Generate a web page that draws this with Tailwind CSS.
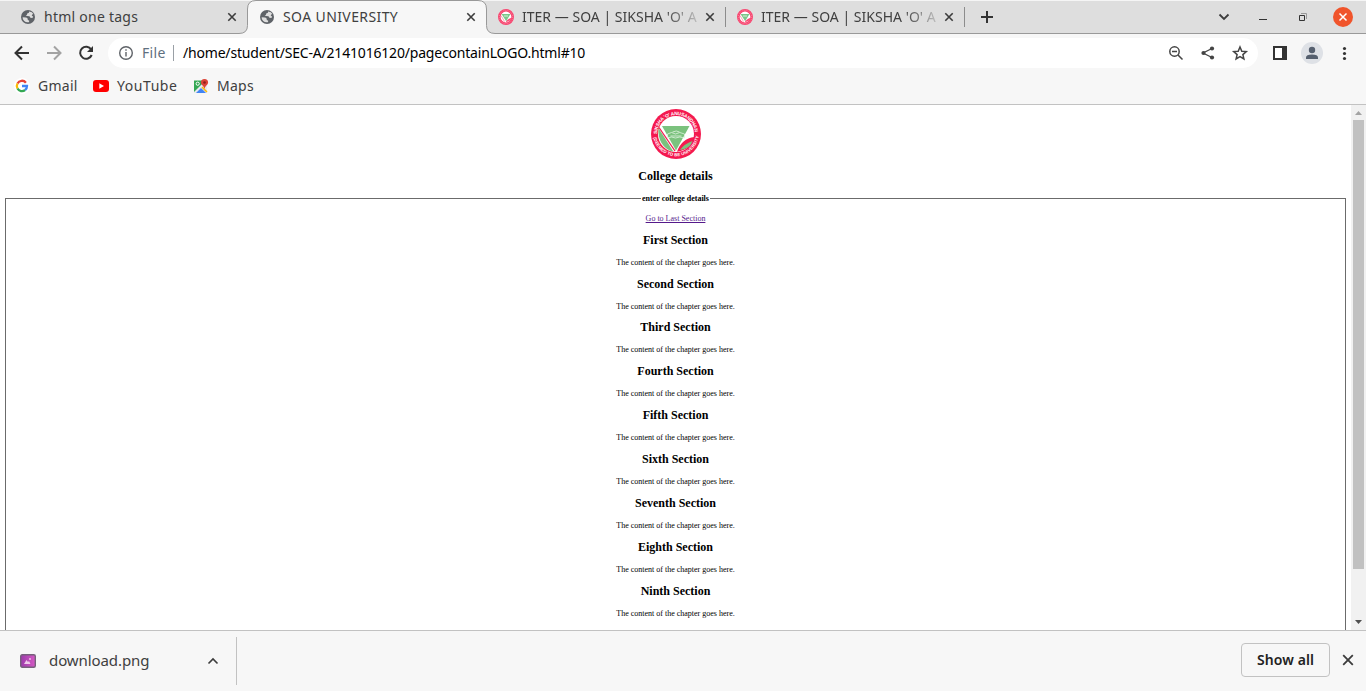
<!DOCTYPE html>
<html lang="en">
<head>
<meta charset="utf-8">
<title>SOA UNIVERSITY</title>
<script src="https://cdn.jsdelivr.net/npm/@tailwindcss/browser@4"></script>
</head>
<body class="h-[691px] w-[1366px] overflow-hidden bg-white font-['Noto_Sans',sans-serif] text-[#404040]">
<svg width="0" height="0" class="hidden">
  <defs>
    <symbol id="globe" viewBox="0 0 14 14"><circle cx="7" cy="7" r="7" fill="#5f6368"/><path d="M1.6 7.2L5 7.5q1.700.2 1.700 1.500l.1.900q1.500.2 1.500 1.100l-.5 1.200Q5 12.700 3.200 11 1.500 9.300 1.600 7.200zM8.100 1.600l-.2 1.200-1.700.6-.2 1.400-1.300.8 1.400.5 2.400.1.900 1.500 1.900.2.900-1.100-1.500-1.300.8-1.300.9-.2Q11.400 2 8.100 1.600z" fill="#dedede"/></symbol>
    <symbol id="x" viewBox="0 0 10 10"><path d="M1.300 1.300l7.400 7.400M8.700 1.300L1.300 8.700" stroke="#3c3c3c" stroke-width="1.600" fill="none"/></symbol>
    <symbol id="fav" viewBox="0 0 16 16"><circle cx="8" cy="8" r="6.700" fill="#fff" stroke="#f7446e" stroke-width="2.600"/><circle cx="8" cy="8" r="6.700" fill="none" stroke="#fba0b4" stroke-width=".7" stroke-dasharray="1 1"/><path d="M3.500 5h9L8.200 12.200z" fill="#7cc68a"/><path d="M6 7h4" stroke="#d6efd9"/><path d="M3 6.500l3.500 6M8 12.800Q10 10 13.500 9 13 12 8 12.800z" fill="#f7446e" stroke="#f7446e" stroke-width=".5"/></symbol>
    <path id="arcTop" d="M6.600 25a18.900 18.900 0 0 1 37.800 0"/>
    <path id="arcBottom" d="M2.800 26.500a22.800 22.800 0 0 0 45.400 0"/>
  </defs>
</svg>

<header class="flex h-[105px] flex-col border-b border-[#c2c2c2] bg-[#f7f7f7]">
  <div class="relative flex h-[34px] border-t border-[#f5f5f5] bg-[#dedede] text-[14px] leading-[30px]">
    <svg class="absolute -top-px left-0" width="1366" height="34"><path d="M0 33.500H239q8.500 0 8.500-8V9q0-8.500 8.500-8.500h222q8.500 0 8.500 8.500v16.500q0 8 8.500 8H1366V35H0z" fill="#f7f7f7"/><path d="M0 33.500H239q8.500 0 8.500-8V9q0-8.500 8.500-8.500h222q8.500 0 8.500 8.500v16.500q0 8 8.500 8H1366" fill="none" stroke="#999"/></svg>
    <div class="relative flex h-8 w-[247px] items-center pl-[21px]"><svg width="14" height="14"><use href="#globe"/></svg><span class="ml-[9px] w-[183px] tracking-[0.25px] whitespace-nowrap">html one tags</span><svg width="10" height="10"><use href="#x"/></svg></div>
    <div class="relative flex h-8 w-[239px] items-center pl-[13px]"><svg width="14" height="14"><use href="#globe"/></svg><span class="ml-[9px] w-[183px] tracking-[0.4px] whitespace-nowrap">SOA UNIVERSITY</span><svg width="10" height="10"><use href="#x"/></svg></div>
    <div class="relative flex h-8 w-[239px] items-center pl-[12px]"><svg width="16" height="16"><use href="#fav"/></svg><span class="ml-[8px] mr-[7px] w-[176px] overflow-hidden tracking-[0.02px] whitespace-nowrap [mask-image:linear-gradient(to_right,black_142px,transparent_184px)]">ITER — SOA | SIKSHA 'O' A</span><svg width="10" height="10"><use href="#x"/></svg></div>
    <div class="relative flex h-8 w-[240px] items-center pl-[12px]"><span class="-ml-[12px] mr-[11px] h-5 w-px bg-[#8c8c8c]"></span><svg width="16" height="16"><use href="#fav"/></svg><span class="ml-[8px] mr-[7px] w-[176px] overflow-hidden tracking-[0.02px] whitespace-nowrap [mask-image:linear-gradient(to_right,black_142px,transparent_184px)]">ITER — SOA | SIKSHA 'O' A</span><svg width="10" height="10"><use href="#x"/></svg><span class="ml-[10px] h-5 w-px bg-[#8c8c8c]"></span></div>
    <svg class="relative ml-[16px] mt-[10px]" width="12" height="12"><path d="M6 0v12M0 6h12" stroke="#333" stroke-width="2"/></svg>
    <svg class="relative ml-[225px]" width="148" height="32" fill="none"><path d="M1.500 13.500L6 18l4.500-4.500" stroke="#3c3c3c" stroke-width="1.800"/><path d="M41 18.500h8" stroke="#333"/><path d="M83 12.500h5.500V18" stroke="#999"/><path d="M81.500 14.500h5v5h-5z" stroke="#333"/><circle cx="125" cy="16" r="10" fill="#f0542b"/><path d="M121.500 12.500l7 7M128.500 12.500l-7 7" stroke="#fff" stroke-width="1.500"/></svg>
  </div>

  <div class="flex h-[38px] items-center">
    <svg width="108" height="38" fill="none" stroke="#333" stroke-width="2"><path d="M29 19H16M22 12.500L15.500 19l6.500 6.500"/><path d="M47 19h13M54 12.500l6.500 6.500-6.500 6.500" stroke="#a3a3a3"/><path d="M91.200 15.500A6 6 0 1 0 91.700 21"/><path d="M93 12v6h-6z" fill="#333" stroke="none"/></svg>
    <div class="flex h-[30px] w-[1150px] items-center rounded-full bg-white pl-[11px] text-[14px]">
      <svg width="14" height="14" fill="none" stroke="#5f6368" stroke-width="1.400"><circle cx="7" cy="7" r="6.300"/><path d="M7 6v4.500M7 3.200v1.600"/></svg>
      <span class="ml-[9px] w-[31px] pb-[2px] tracking-[0.3px] whitespace-nowrap text-[#5f7080]">File</span><span class="h-4 w-px bg-[#9aa0a6]"></span>
      <span class="ml-[9px] w-[986px] pb-[2px] tracking-[-0.19px] whitespace-nowrap text-black">/home/student/SEC-A/2141016120/pagecontainLOGO.html#10</span>
      <svg class="shrink-0" width="80" height="30" fill="none" stroke="#444" stroke-width="1.500"><circle cx="5.500" cy="13.500" r="4.700"/><path d="M9 17l4.500 4.500M3 13.500h5"/><path d="M43 10.500L34 15l9 4.500" stroke-width="1.300"/><g fill="#444" stroke="none"><circle cx="43" cy="10.500" r="2.100"/><circle cx="34.500" cy="15" r="2.100"/><circle cx="43" cy="19.500" r="2.100"/></g><path d="M71 9l1.800 4.200 4.500.4-3.400 3 1 4.400-3.900-2.300-3.900 2.300 1-4.400-3.400-3 4.500-.4z"/></svg>
    </div>
    <svg width="108" height="38"><path d="M15 12h14v14H15z" fill="#333"/><path d="M17 14h7v10h-7z" fill="#fff"/><circle cx="54" cy="19" r="11" fill="#dee1e6"/><g fill="#56606f"><circle cx="54" cy="16" r="3.200"/><path d="M48 25v-1.500q0-3 6-3t6 3V25z"/></g><g fill="#333"><circle cx="86.500" cy="14.500" r="1.600"/><circle cx="86.500" cy="19.500" r="1.600"/><circle cx="86.500" cy="24.500" r="1.600"/></g></svg>
  </div>

  <div class="flex h-7 items-center pl-[14px] text-[14px]">
    <svg width="16" height="16" fill="none" stroke-width="2.300"><circle cx="8" cy="8" r="8" fill="#fff"/><path d="M11.900 4.700A5 5 0 0 0 3.500 5.500" stroke="#ea4335"/><path d="M3.500 5.500a5 5 0 0 0 0 5" stroke="#fbbc05"/><path d="M3.500 10.500a5 5 0 0 0 7.600 1.500" stroke="#34a853"/><path d="M11.100 12A5 5 0 0 0 13 8H8" stroke="#4285f4"/></svg>
    <span class="ml-2 w-[55px] pb-[2px] tracking-[0.25px] whitespace-nowrap">Gmail</span>
    <svg width="16" height="16"><rect y="2" width="16" height="12" rx="3" fill="#f00"/><path d="M6.300 5.300v5.400L11 8z" fill="#fff"/></svg>
    <span class="ml-2 w-[76px] pb-[2px] tracking-[0.55px] whitespace-nowrap">YouTube</span>
    <svg width="16" height="16"><path d="M1 2.500h13V15H1z" fill="#34a853"/><path d="M1 14L11 4l3 3v8H1z" fill="#e8eaed"/><path d="M3 15l5-5 5 5z" fill="#4285f4"/><path d="M9 9l5 5" stroke="#fbbc05" stroke-width="1.500"/><circle cx="4.700" cy="5.700" r="1.600" fill="none" stroke="#fff"/><path d="M11.500 1a3.600 3.600 0 0 1 3.600 3.600c0 2.500-2.800 3-3.600 6.400-.8-3.400-3.600-3.900-3.600-6.400A3.600 3.600 0 0 1 11.500 1z" fill="#db4437"/><circle cx="11.500" cy="4.500" r="1.300" fill="#8c2118"/></svg>
    <span class="ml-2 pb-[2px] tracking-[0.25px] whitespace-nowrap">Maps</span>
  </div>
</header>

<main class="flex h-[525px] font-['Liberation_Serif',serif] text-black">
  <div class="flex w-[1351px] flex-col items-center overflow-hidden pt-1">
    <svg class="ml-px shrink-0" width="50" height="50" viewBox="0.5 0 50 50"><circle cx="25.500" cy="25" r="25" fill="#f4194f"/><circle cx="25.500" cy="25" r="18" fill="#fff"/><path d="M11.500 17h27.500L25.500 41.500z" fill="#7bc27e"/><path d="M8 19C7 30 12 40 23 42.800z" fill="#7bc27e"/><path d="M8.500 18.500L24.500 42" stroke="#f4194f" stroke-width="1.300"/><path d="M26.500 42.800Q31 29.500 44 28 42 40 26.500 42.800z" fill="#f4194f"/><path d="M29.500 41q4-6 12.500-9-2.500 8-12.500 9z" fill="#7bc27e"/><path d="M17 25q4-3 8 0 4-3 9 0v4q-5-2-9 0-4-2-8 0zM20 27h11M22 23q4-2 7 0" fill="none" stroke="#dff2df" stroke-width=".8"/><g fill="#fff" font-family="Liberation Sans" font-weight="bold"><text font-size="4.800"><textPath href="#arcTop" textLength="57">SIKSHA 'O' ANUSANDHAN</textPath></text><text font-size="4.300"><textPath href="#arcBottom" textLength="66" startOffset="2">(DEEMED TO BE UNIVERSITY)</textPath></text></g></svg>
    <h1 class="mt-[10px] shrink-0 text-[12px] leading-[14px] font-bold">College details</h1>
    <fieldset class="mt-[11px] h-[600px] w-[1341px] shrink-0 border border-b-0 border-[#6b6b6b] text-center text-[8px] leading-[9px]">
      <legend class="mx-auto px-px font-bold">enter college details</legend>
      <p class="mt-[11px] h-[18.7px]"><a class="text-[#551a8b] underline">Go to Last Section</a></p>
      <section class="h-[43.875px]"><h2 class="text-[12px] leading-[14px] font-bold">First Section</h2><p class="mt-[11px]">The content of the chapter goes here.</p></section>
      <section class="h-[43.875px]"><h2 class="text-[12px] leading-[14px] font-bold">Second Section</h2><p class="mt-[11px]">The content of the chapter goes here.</p></section>
      <section class="h-[43.875px]"><h2 class="text-[12px] leading-[14px] font-bold">Third Section</h2><p class="mt-[11px]">The content of the chapter goes here.</p></section>
      <section class="h-[43.875px]"><h2 class="text-[12px] leading-[14px] font-bold">Fourth Section</h2><p class="mt-[11px]">The content of the chapter goes here.</p></section>
      <section class="h-[43.875px]"><h2 class="text-[12px] leading-[14px] font-bold">Fifth Section</h2><p class="mt-[11px]">The content of the chapter goes here.</p></section>
      <section class="h-[43.875px]"><h2 class="text-[12px] leading-[14px] font-bold">Sixth Section</h2><p class="mt-[11px]">The content of the chapter goes here.</p></section>
      <section class="h-[43.875px]"><h2 class="text-[12px] leading-[14px] font-bold">Seventh Section</h2><p class="mt-[11px]">The content of the chapter goes here.</p></section>
      <section class="h-[43.875px]"><h2 class="text-[12px] leading-[14px] font-bold">Eighth Section</h2><p class="mt-[11px]">The content of the chapter goes here.</p></section>
      <section class="h-[43.875px]"><h2 class="text-[12px] leading-[14px] font-bold">Ninth Section</h2><p class="mt-[11px]">The content of the chapter goes here.</p></section>
    </fieldset>
  </div>
  <div class="flex w-[15px] flex-col items-center bg-[#f1f1f1]">
    <svg width="15" height="15"><path d="M4 10h7L7.500 6z" fill="#a3a3a3"/></svg>
    <div class="h-[449px] w-[11px] bg-[#c1c1c1]"></div>
    <svg class="mt-auto" width="15" height="15"><path d="M4 5h7L7.500 9z" fill="#505050"/></svg>
  </div>
</main>

<footer class="flex h-[61px] items-center border-t border-[#c2c2c2] bg-[#f7f7f7]">
  <svg class="mb-px ml-5" width="16" height="14"><defs><linearGradient id="pg"><stop stop-color="#9c3bab"/><stop offset="1" stop-color="#d65ac4"/></linearGradient></defs><rect x=".7" y=".7" width="14.600" height="12.600" rx="1.500" fill="url(#pg)" stroke="#76607c" stroke-width="1.400"/><path d="M4 10l2.500-4 1.500 2 1-1 1.500 3z" fill="#eecbea"/><path d="M9 4h2v2H9z" fill="#e2a6dc"/></svg>
  <span class="ml-[13px] w-[158px] pb-[2px] text-[15px] tracking-[-0.08px]">download.png</span>
  <svg width="12" height="12"><path d="M1.500 8.500L6 4l4.500 4.500" fill="none" stroke="#3c3c3c" stroke-width="1.600"/></svg>
  <span class="ml-[17px] h-12 w-px bg-[#c2c2c2]"></span>
  <button class="mb-[2px] ml-auto h-[34px] w-[89px] rounded-[4px] border border-[#c2c2c2] pb-px text-[14px] font-semibold tracking-[0.1px] whitespace-nowrap text-[#222]">Show all</button>
  <svg class="mr-[12px] mb-[2px] ml-[12px]" width="12" height="12" viewBox="0 0 10 10"><path d="M1 1l8 8M9 1L1 9" stroke="#3c3c3c" stroke-width="1.500"/></svg>
</footer>
</body>
</html>
